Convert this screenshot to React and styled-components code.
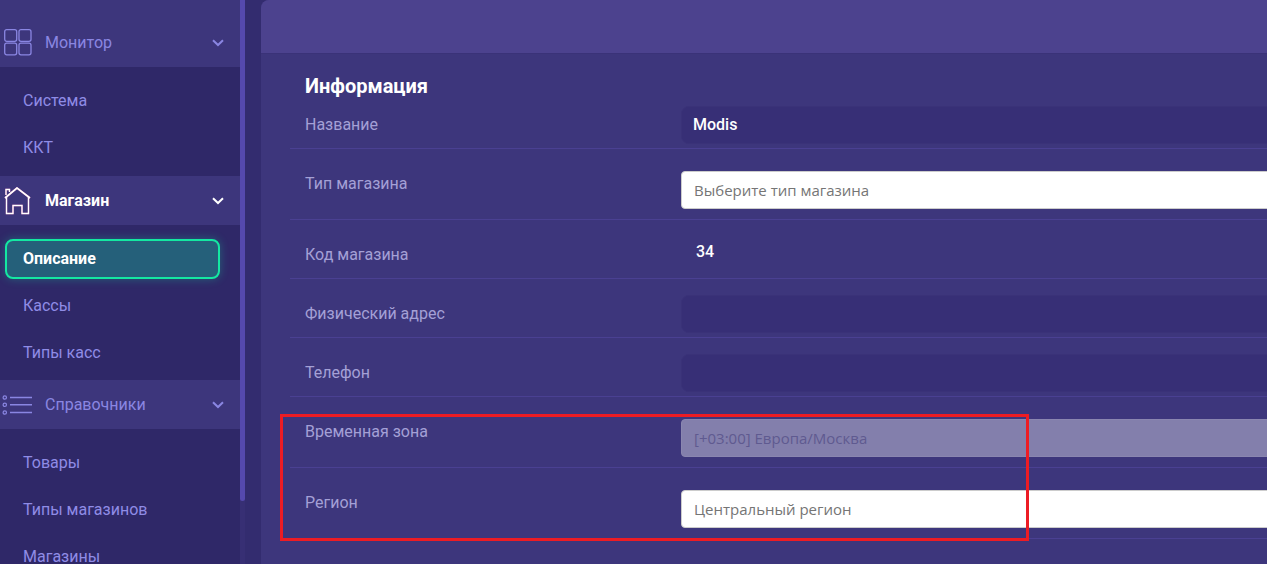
import styled, { createGlobalStyle } from "styled-components";

const GlobalStyle = createGlobalStyle`
  html, body {
    margin: 0;
    height: 100%;
    overflow: hidden;
    background: #2f2868;
    font-family: "Roboto", "Liberation Sans", sans-serif;
  }
  * {
    box-sizing: border-box;
  }
`;

const GridIcon = () => (
  <svg width="28" height="28" viewBox="0 0 28 28" fill="none" stroke="currentColor" strokeWidth="1.3">
    <rect x="0.7" y="0.7" width="12" height="11.6" rx="2" />
    <rect x="15" y="0.7" width="12" height="11.6" rx="2" />
    <rect x="0.7" y="14.2" width="12" height="11.6" rx="2" />
    <rect x="15" y="14.2" width="12" height="11.6" rx="2" />
  </svg>
);

const HomeIcon = () => (
  <svg width="28" height="28" viewBox="0 0 28 28" fill="none" stroke="currentColor" strokeWidth="1.4">
    <path d="M1 11 13 1l13 10" strokeWidth="1.7" />
    <path d="M2 8V2.5h3.5V5" />
    <path d="M2.5 10v16.5H9v-8h9v8h6.5V10" />
  </svg>
);

const ListIcon = () => (
  <svg width="28" height="28" viewBox="0 0 28 28" fill="none" stroke="currentColor" strokeWidth="1.2" overflow="visible">
    <circle cx="0.8" cy="6.5" r="1.7" />
    <circle cx="0.8" cy="13.8" r="1.7" />
    <circle cx="0.8" cy="21.5" r="1.7" />
    <path d="M6 6.5h22M6 13.8h22M6 21.5h22" strokeWidth="1.5" />
  </svg>
);

const Chevron = () => (
  <svg width="12" height="8" viewBox="0 0 12 8" fill="none" stroke="currentColor" strokeWidth="2">
    <path d="M1 1.2 6 6l5-4.8" />
  </svg>
);

const MENU = [
  {
    title: "Монитор",
    icon: <GridIcon />,
    first: true,
    items: [{ label: "Система" }, { label: "ККТ" }],
  },
  {
    title: "Магазин",
    icon: <HomeIcon />,
    open: true,
    tight: true,
    items: [{ label: "Описание", active: true }, { label: "Кассы" }, { label: "Типы касс" }],
  },
  {
    title: "Справочники",
    icon: <ListIcon />,
    items: [{ label: "Товары" }, { label: "Типы магазинов" }, { label: "Магазины" }],
  },
];

const FIELDS = [
  { label: "Название", kind: "text", value: "Modis" },
  { label: "Тип магазина", kind: "select", placeholder: "Выберите тип магазина" },
  { label: "Код магазина", kind: "static", value: "34" },
  { label: "Физический адрес", kind: "text", value: "" },
  { label: "Телефон", kind: "text", value: "" },
  { label: "Временная зона", kind: "disabled", value: "[+03:00] Европа/Москва" },
  { label: "Регион", kind: "select", value: "Центральный регион" },
];

const App = () => {
  return (
    <>
      <GlobalStyle />
      <Page>
        <Sidebar>
          {MENU.map((group) => (
            <section key={group.title}>
              <GroupHeader $first={group.first} $open={group.open}>
                <IconBox $open={group.open}>{group.icon}</IconBox>
                <GroupTitle $open={group.open}>{group.title}</GroupTitle>
                <ChevronBox>
                  <Chevron />
                </ChevronBox>
              </GroupHeader>
              <SubList $tight={group.tight}>
                {group.items.map((item) => (
                  <SubItem key={item.label} $active={item.active}>
                    {item.label}
                  </SubItem>
                ))}
              </SubList>
            </section>
          ))}
        </Sidebar>
        <ScrollTrack>
          <ScrollThumb />
        </ScrollTrack>
        <Main>
          <MainHeader />
          <Body>
            <Title>Информация</Title>
            {FIELDS.map((field) => {
              const tall = field.kind === "select" || field.kind === "disabled";
              return (
                <Row key={field.label} $tall={tall}>
                  <Label>{field.label}</Label>
                  {field.kind === "static" ? (
                    <StaticValue>{field.value}</StaticValue>
                  ) : field.kind === "text" ? (
                    <DarkInput readOnly value={field.value} />
                  ) : (
                    <LightInput
                      readOnly
                      disabled={field.kind === "disabled"}
                      value={field.value || ""}
                      placeholder={field.placeholder}
                    />
                  )}
                </Row>
              );
            })}
            <Highlight />
          </Body>
        </Main>
      </Page>
    </>
  );
};

export default App;

const Page = styled.div`
  display: flex;
  width: 100%;
  height: 564px;
  overflow: hidden;
  background: #332c6f;
`;

const Sidebar = styled.nav`
  flex: 0 0 240px;
  height: 564px;
  overflow: hidden;
  background: #2f2868;
`;

const GroupHeader = styled.div`
  display: flex;
  align-items: center;
  height: ${({ $first }) => ($first ? "67px" : "49px")};
  padding: ${({ $first }) => ($first ? "18px" : "0")} 16px 0 4px;
  background: #3d367c;
  color: ${({ $open }) => ($open ? "#ffffff" : "#8a86e2")};
`;

const IconBox = styled.div`
  display: flex;
  width: 41px;
  flex: none;
  filter: ${({ $open }) =>
    $open ? "drop-shadow(0.7px 0 0 rgba(232, 60, 140, 0.7))" : "none"};
`;

const GroupTitle = styled.span`
  flex: 1;
  font-size: 16px;
  font-weight: ${({ $open }) => ($open ? 700 : 400)};
`;

const ChevronBox = styled.div`
  display: flex;
`;

const SubList = styled.div`
  padding: 10px 0 ${({ $tight }) => ($tight ? "4px" : "5px")};
`;

const SubItem = styled.div`
  display: flex;
  align-items: center;
  height: ${({ $active }) => ($active ? "40px" : "47px")};
  margin: ${({ $active }) => ($active ? "4px 20px 3px 5px" : "0")};
  padding: ${({ $active }) => ($active ? "0 0 1px 16px" : "0 0 0 23px")};
  border: ${({ $active }) => ($active ? "2px solid #14e8a2" : "0")};
  border-radius: 8px;
  background: ${({ $active }) => ($active ? "#25607a" : "transparent")};
  box-shadow: ${({ $active }) => ($active ? "0 0 10px rgba(20, 232, 162, 0.3)" : "none")};
  color: ${({ $active }) => ($active ? "#ffffff" : "#8f8ce6")};
  font-size: 16px;
  font-weight: ${({ $active }) => ($active ? 700 : 400)};
`;

const ScrollTrack = styled.div`
  flex: 0 0 5px;
  height: 564px;
  background: #372f74;
`;

const ScrollThumb = styled.div`
  height: 501px;
  background: #5549ad;
  border-radius: 0 0 3px 3px;
`;

const Main = styled.main`
  flex: 1;
  min-width: 0;
  margin-left: 16px;
  border-radius: 8px 0 0 0;
  overflow: hidden;
  background: #3d367c;
`;

const MainHeader = styled.header`
  height: 54px;
  background: #4c428e;
  border-bottom: 1px solid #3a3278;
`;

const Body = styled.div`
  position: relative;
  padding: 20px 0 0 29px;
`;

const Title = styled.h2`
  margin: 0 0 -8px 15px;
  color: #ffffff;
  font-size: 20px;
  font-weight: 700;
  line-height: 24px;
`;

// строки уходят за правый край окна, как и в оригинале
const Row = styled.div`
  display: grid;
  grid-template-columns: 391px 1fr;
  align-items: start;
  height: ${({ $tall }) => ($tall ? "71px" : "59px")};
  margin-right: -20px;
  border-bottom: 1px solid #4a4092;
`;

const Label = styled.div`
  padding: 25px 0 0 15px;
  color: #a4a0d6;
  font-size: 16px;
  line-height: 20px;
`;

const DarkInput = styled.input`
  width: 100%;
  height: 38px;
  margin-top: 16px;
  padding: 0 11px 1px;
  border: 1px solid #3a3278;
  border-radius: 8px;
  outline: none;
  background: #372f76;
  color: #ffffff;
  font-family: "Roboto", sans-serif;
  font-size: 16px;
  font-weight: 500;
`;

const LightInput = styled.input`
  width: 100%;
  height: 38px;
  margin-top: 22px;
  padding: 0 12px;
  border: 1px solid #cccccc;
  border-radius: 4px;
  outline: none;
  background: #ffffff;
  color: #757575;
  font-family: "Open Sans", sans-serif;
  font-size: 15px;

  &::placeholder {
    color: #757575;
    opacity: 1;
  }

  &:disabled {
    background: #837fac;
    border-color: #8a86b0;
    color: #5f5a90;
  }
`;

const StaticValue = styled.div`
  padding: 22px 0 0 15px;
  color: #ffffff;
  font-size: 16px;
  font-weight: 500;
  line-height: 20px;
`;

const Highlight = styled.div`
  position: absolute;
  left: 19px;
  top: 360px;
  width: 749px;
  height: 127px;
  border: 3px solid #ed1c24;
  pointer-events: none;
`;
